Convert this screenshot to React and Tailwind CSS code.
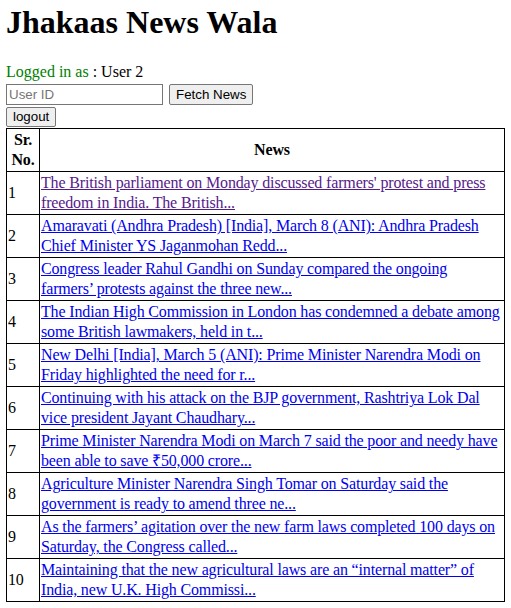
const news = [
  "The British parliament on Monday discussed farmers' protest and press freedom in India. The British...",
  "Amaravati (Andhra Pradesh) [India], March 8 (ANI): Andhra Pradesh Chief Minister YS Jaganmohan Redd...",
  "Congress leader Rahul Gandhi on Sunday compared the ongoing farmers’ protests against the three new...",
  "The Indian High Commission in London has condemned a debate among some British lawmakers, held in t...",
  "New Delhi [India], March 5 (ANI): Prime Minister Narendra Modi on Friday highlighted the need for r...",
  "Continuing with his attack on the BJP government, Rashtriya Lok Dal vice president Jayant Chaudhary...",
  "Prime Minister Narendra Modi on March 7 said the poor and needy have been able to save ₹50,000 crore...",
  "Agriculture Minister Narendra Singh Tomar on Saturday said the government is ready to amend three ne...",
  "As the farmers’ agitation over the new farm laws completed 100 days on Saturday, the Congress called...",
  "Maintaining that the new agricultural laws are an “internal matter” of India, new U.K. High Commissi...",
];

export default function App() {
  return (
    <div className="px-[6px] pt-[4px] font-['Liberation_Serif',serif] text-[16px] text-black bg-white min-h-screen">
      <h1 className="text-[32px] font-bold leading-[37px] mb-[22px]">Jhakaas News Wala</h1>
      <p className="leading-[18px]">
        <span className="text-[#008000]">Logged in as</span> : User 2
      </p>
      <div className="flex gap-[6px] mt-[3px] font-['Liberation_Sans',Arial,sans-serif] text-[13.33px]">
        <input
          type="text"
          placeholder="User ID"
          className="w-[157px] h-[21px] border border-[#767676] px-[2px] placeholder:text-[#757575] outline-none"
        />
        <button className="h-[21px] px-[6px] bg-[#efefef] border border-[#767676] rounded-[2px]">Fetch News</button>
      </div>
      <div className="mt-[2px] font-['Liberation_Sans',Arial,sans-serif] text-[13.33px]">
        <button className="h-[20px] px-[6px] bg-[#efefef] border border-[#767676] rounded-[2px] leading-none">
          logout
        </button>
      </div>
      <table className="w-full table-fixed border-collapse border border-black leading-[20px] tracking-[-0.15px] mt-[1px]">
        <colgroup>
          <col className="w-[33px]" />
          <col />
        </colgroup>
        <thead>
          <tr>
            <th className="border border-black p-[1px] font-bold">Sr. No.</th>
            <th className="border border-black p-[1px] font-bold">News</th>
          </tr>
        </thead>
        <tbody>
          {news.map((item, i) => (
            <tr key={i}>
              <td className="border border-black p-[1px] align-middle">{i + 1}</td>
              <td className="border border-black p-[1px]">
                <a href="#" className={`underline ${i === 0 ? "text-[#551a8b]" : "text-[#0000ee]"}`}>
                  {item}
                </a>
              </td>
            </tr>
          ))}
        </tbody>
      </table>
    </div>
  );
}
